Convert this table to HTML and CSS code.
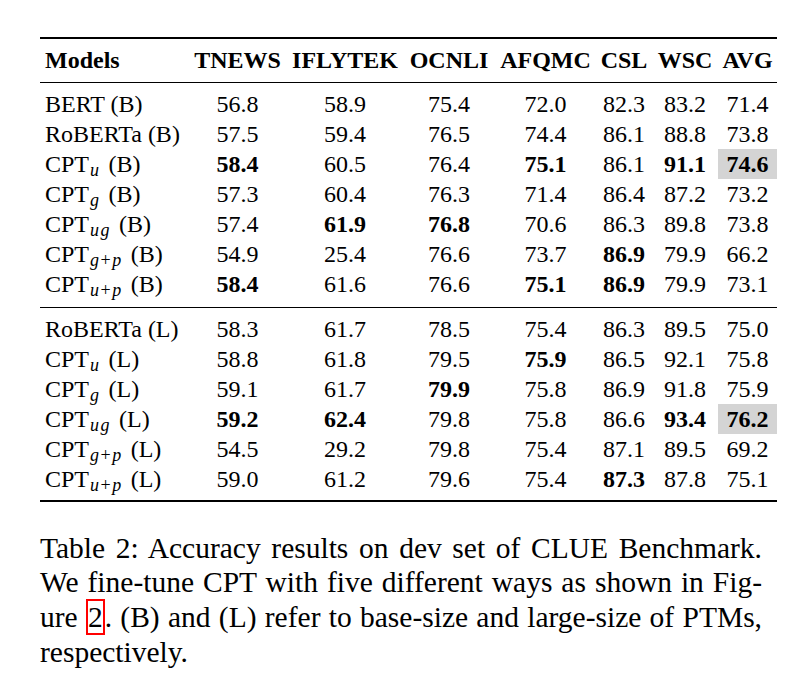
FILE: index.html
```html
<!DOCTYPE html>
<html lang="en">
<head>
<meta charset="utf-8">
<title>Table 2: Accuracy results on CLUE</title>
<link rel="stylesheet" href="styles.css">
</head>
<body>
<div class="page">
  <table class="results">
    <colgroup>
      <col class="c-model">
      <col class="c-tnews">
      <col class="c-iflytek">
      <col class="c-ocnli">
      <col class="c-afqmc">
      <col class="c-csl">
      <col class="c-wsc">
      <col class="c-avg">
    </colgroup>
    <thead>
      <tr>
        <th class="model">Models</th>
        <th>TNEWS</th>
        <th>IFLYTEK</th>
        <th>OCNLI</th>
        <th>AFQMC</th>
        <th>CSL</th>
        <th>WSC</th>
        <th>AVG</th>
      </tr>
    </thead>
    <tbody class="grp grp-b">
      <tr class="first">
        <td class="model">BERT (B)</td>
        <td>56.8</td><td>58.9</td><td>75.4</td><td>72.0</td><td>82.3</td><td>83.2</td><td>71.4</td>
      </tr>
      <tr>
        <td class="model">RoBERTa (B)</td>
        <td>57.5</td><td>59.4</td><td>76.5</td><td>74.4</td><td>86.1</td><td>88.8</td><td>73.8</td>
      </tr>
      <tr>
        <td class="model">CPT<span class="sub"><i>u</i></span> (B)</td>
        <td class="b">58.4</td><td>60.5</td><td>76.4</td><td class="b">75.1</td><td>86.1</td><td class="b">91.1</td><td class="b hl">74.6</td>
      </tr>
      <tr>
        <td class="model">CPT<span class="sub"><i>g</i></span> (B)</td>
        <td>57.3</td><td>60.4</td><td>76.3</td><td>71.4</td><td>86.4</td><td>87.2</td><td>73.2</td>
      </tr>
      <tr>
        <td class="model">CPT<span class="sub"><i>ug</i></span> (B)</td>
        <td>57.4</td><td class="b">61.9</td><td class="b">76.8</td><td>70.6</td><td>86.3</td><td>89.8</td><td>73.8</td>
      </tr>
      <tr>
        <td class="model">CPT<span class="sub"><i>g</i>+<i>p</i></span> (B)</td>
        <td>54.9</td><td>25.4</td><td>76.6</td><td>73.7</td><td class="b">86.9</td><td>79.9</td><td>66.2</td>
      </tr>
      <tr class="last">
        <td class="model">CPT<span class="sub"><i>u</i>+<i>p</i></span> (B)</td>
        <td class="b">58.4</td><td>61.6</td><td>76.6</td><td class="b">75.1</td><td class="b">86.9</td><td>79.9</td><td>73.1</td>
      </tr>
    </tbody>
    <tbody class="grp grp-l">
      <tr class="first">
        <td class="model">RoBERTa (L)</td>
        <td>58.3</td><td>61.7</td><td>78.5</td><td>75.4</td><td>86.3</td><td>89.5</td><td>75.0</td>
      </tr>
      <tr>
        <td class="model">CPT<span class="sub"><i>u</i></span> (L)</td>
        <td>58.8</td><td>61.8</td><td>79.5</td><td class="b">75.9</td><td>86.5</td><td>92.1</td><td>75.8</td>
      </tr>
      <tr>
        <td class="model">CPT<span class="sub"><i>g</i></span> (L)</td>
        <td>59.1</td><td>61.7</td><td class="b">79.9</td><td>75.8</td><td>86.9</td><td>91.8</td><td>75.9</td>
      </tr>
      <tr>
        <td class="model">CPT<span class="sub"><i>ug</i></span> (L)</td>
        <td class="b">59.2</td><td class="b">62.4</td><td>79.8</td><td>75.8</td><td>86.6</td><td class="b">93.4</td><td class="b hl">76.2</td>
      </tr>
      <tr>
        <td class="model">CPT<span class="sub"><i>g</i>+<i>p</i></span> (L)</td>
        <td>54.5</td><td>29.2</td><td>79.8</td><td>75.4</td><td>87.1</td><td>89.5</td><td>69.2</td>
      </tr>
      <tr class="last">
        <td class="model">CPT<span class="sub"><i>u</i>+<i>p</i></span> (L)</td>
        <td>59.0</td><td>61.2</td><td>79.6</td><td>75.4</td><td class="b">87.3</td><td>87.8</td><td>75.1</td>
      </tr>
    </tbody>
  </table>

  <p class="caption">
    <span class="cl">Table 2: Accuracy results on dev set of CLUE Benchmark.</span>
    <span class="cl">We fine-tune CPT with five different ways as shown in Fig-</span>
    <span class="cl">ure <span class="ref">2</span>. (B) and (L) refer to base-size and large-size of PTMs,</span>
    <span class="cl cl-last">respectively.</span>
  </p>
</div>
</body>
</html>
```

FILE: styles.css
```css
html, body {
  margin: 0;
  padding: 0;
  background: #ffffff;
}

body {
  font-family: "Liberation Serif", "Times New Roman", serif;
  color: #000000;
}

.page {
  width: 737px;
  padding: 37px 0 0 40px;
}

/* ---------- table ---------- */
.results {
  width: 737px;
  table-layout: fixed;
  border-collapse: separate;
  border-spacing: 0;
  font-size: 24px;
}

.c-model   { width: 148px; }
.c-tnews   { width: 99px; }
.c-iflytek { width: 116px; }
.c-ocnli   { width: 92px; }
.c-afqmc   { width: 101px; }
.c-csl     { width: 56px; }
.c-wsc     { width: 66px; }
.c-avg     { width: 59px; }

.results th {
  font-weight: bold;
  line-height: 43px;
  padding: 0 4px;
  text-align: center;
  white-space: nowrap;
  border-top: 2px solid #000;
  border-bottom: 1px solid #000;
}

.results td {
  line-height: 30px;
  padding: 0 4px;
  text-align: center;
  white-space: nowrap;
}

.results .model {
  text-align: left;
  padding-left: 5px;
}

.results .b {
  font-weight: bold;
}

.results .hl {
  background: #d4d4d4;
}

.grp .first td {
  padding-top: 6px;
}

.grp-b .last td {
  padding-bottom: 8px;
  border-bottom: 1px solid #000;
}

.grp-l .last td {
  padding-bottom: 6px;
  border-bottom: 2px solid #000;
}

.sub {
  font-size: 18px;
  line-height: 1;
  vertical-align: -4px;
  margin-left: 1px;
  margin-right: 2px;
  letter-spacing: 1.5px;
}

.sub i {
  font-style: italic;
}

/* ---------- caption ---------- */
.caption {
  width: 722px;
  margin: 29px 0 0 0;
  font-size: 29.5px;
  line-height: 34px;
}

.cl {
  display: block;
  text-align: justify;
  text-align-last: justify;
}

.cl-last {
  text-align-last: left;
}

.ref {
  display: inline-block;
  height: 32px;
  line-height: 32px;
  border: 2px solid #ff0000;
  padding: 0;
}
```
